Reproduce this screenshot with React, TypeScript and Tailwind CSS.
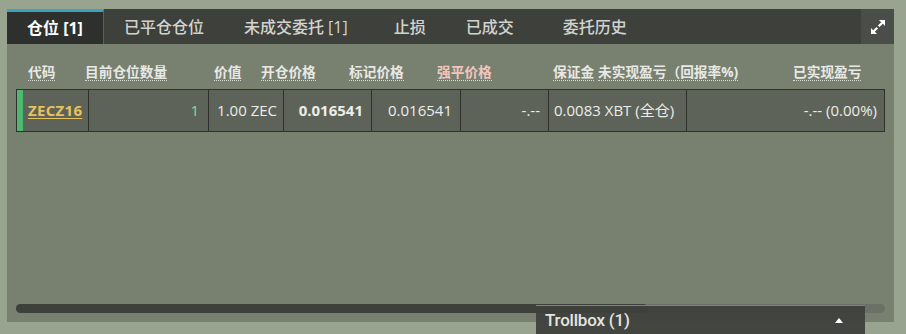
import React from "react";

const font = "font-['Open_Sans','Noto_Sans_CJK_SC',sans-serif]";

const tabs = [
  { label: "仓位 [1]", active: true, pad: "px-[20px]" },
  { label: "已平仓仓位", pad: "px-[20px]" },
  { label: "未成交委托 [1]", pad: "pl-[20px] pr-[26px]" },
  { label: "止损", pad: "px-[20px]" },
  { label: "已成交", pad: "pl-[20px] pr-[29px]" },
  { label: "委托历史", pad: "px-[20px]" },
];

// header labels with the width of the slot each one sits in
const headers = [
  { label: "代码", w: "w-[57px]" },
  { label: "目前仓位数量", w: "w-[129px]" },
  { label: "价值", w: "w-[47px]" },
  { label: "开仓价格", w: "w-[88px]" },
  { label: "标记价格", w: "w-[88px]" },
  { label: "强平价格", w: "w-[116px]", pink: true },
  { label: "保证金", w: "w-[45px]" },
  { label: "未实现盈亏（回报率%)", w: "w-[195px]" },
  { label: "已实现盈亏", w: "" },
];

const ExpandIcon = () => (
  <svg width="16" height="16" viewBox="0 0 16 16" fill="white">
    <path d="M9 1h6v6l-2.2-2.2-3.3 3.3-1.6-1.6 3.3-3.3z" />
    <path d="M7 15H1V9l2.2 2.2 3.3-3.3 1.6 1.6-3.3 3.3z" />
  </svg>
);

export default function App() {
  return (
    <div className={`relative w-[906px] h-[334px] overflow-hidden bg-[#98a48f] pt-[9px] pl-[7px] ${font}`}>
      <div className="w-[887px] h-[313px] bg-[#788070] flex flex-col">
        {/* tabs */}
        <div className="h-[35px] bg-[#3e403c] flex items-stretch">
          {tabs.map((t) =>
            t.active ? (
              <div
                key={t.label}
                className={`${t.pad} bg-[#2e302d] border-t-[3px] border-[#3ba3c2] border-r border-r-[#5c5e5a] flex items-center text-[16px] font-bold text-white`}
              >
                {t.label}
              </div>
            ) : (
              <div key={t.label} className={`${t.pad} flex items-center text-[16px] font-medium text-[#d2d3cf]`}>
                {t.label}
              </div>
            )
          )}
          <div className="ml-auto w-[33px] bg-[#4b4d49] flex items-center justify-center">
            <ExpandIcon />
          </div>
        </div>

        {/* body */}
        <div className="flex-1 flex flex-col px-[9px] pb-[9px]">
          <div className="flex pt-[15px] mb-[6px] pl-[12px]">
            {headers.map((h) => (
              <div key={h.label} className={`${h.w} shrink-0`}>
                <span
                  className={`inline-block leading-[16px] text-[13.7px] font-bold border-b border-dotted border-[#d8dad4] ${
                    h.pink ? "text-[#f3c6bd]" : "text-[#e8e9e5]"
                  }`}
                >
                  {h.label}
                </span>
              </div>
            ))}
          </div>

          <div className="w-[869px] h-[43px] flex bg-[#5e6359] border border-[#2f312d] text-[15px] text-[#ecece8]">
            <div className="w-[6px] bg-[#4dbb6f] shrink-0" />
            <div className="w-[66px] flex items-center pl-[5px] border-r border-[#2f312d]">
              <span className="font-bold text-[#e9c25e] underline underline-offset-2 tracking-[0.3px]">ZECZ16</span>
            </div>
            <div className="w-[120px] flex items-center justify-end pr-[9px] border-r border-[#2f312d] text-[#8ad6a3]">1</div>
            <div className="w-[75px] flex items-center justify-end pr-[6px] border-r border-[#2f312d]">1.00 ZEC</div>
            <div className="w-[88px] flex items-center justify-end pr-[8px] border-r border-[#2f312d] font-bold">0.016541</div>
            <div className="w-[89px] flex items-center justify-end pr-[8px] border-r border-[#2f312d]">0.016541</div>
            <div className="w-[88px] flex items-center justify-end pr-[8px] border-r border-[#2f312d]">-.--</div>
            <div className="w-[138px] flex items-center pl-[5px] border-r border-[#2f312d]">0.0083 XBT (全仓)</div>
            <div className="flex-1 flex items-center justify-end pr-[7px]">-.-- (0.00%)</div>
          </div>

          <div className="flex-1" />

          <div className="w-[869px] h-[9px] rounded-full bg-[#6b7166]">
            <div className="w-[632px] h-full rounded-full bg-[#3d403b]" />
          </div>
        </div>
      </div>

      {/* trollbox tab */}
      <div className="absolute left-[536px] top-[305px] w-[329px] h-[30px] bg-[#3e403c]/95 border-t border-[#80857b] flex items-center px-[9px] font-['Roboto',sans-serif]">
        <span className="text-[17px] font-medium text-[#e4e5e1] tracking-[-0.2px]">Trollbox (1)</span>
        <span className="ml-auto mr-[13px] w-0 h-0 border-l-[4px] border-r-[4px] border-b-[5px] border-l-transparent border-r-transparent border-b-white" />
      </div>
    </div>
  );
}
